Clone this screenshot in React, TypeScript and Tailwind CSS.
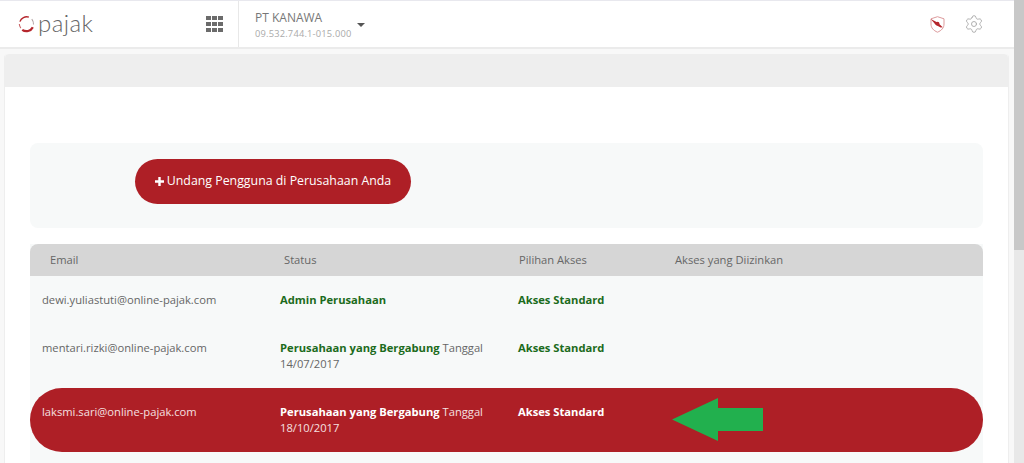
import { Settings } from "lucide-react";

type Row = {
  email: string;
  status: string;
  date?: string;
  active?: boolean;
  height: string;
};

const rows: Row[] = [
  { email: "dewi.yuliastuti@online-pajak.com", status: "Admin Perusahaan", height: "h-[48px]" },
  { email: "mentari.rizki@online-pajak.com", status: "Perusahaan yang Bergabung", date: "14/07/2017", height: "h-[64px]" },
  { email: "laksmi.sari@online-pajak.com", status: "Perusahaan yang Bergabung", date: "18/10/2017", active: true, height: "h-[64px]" },
];

function Logo() {
  return (
    <div className="flex items-center gap-[3px]">
      <svg width="17" height="18" viewBox="0 0 18 18" fill="none">
        <path d="M2 6.5A7.6 7.6 0 0 1 11.5 1.7" stroke="#b5262c" strokeWidth="1.5" />
        <path d="M14.6 3.8A7.6 7.6 0 0 1 16.4 9.5" stroke="#b0a0a0" strokeWidth="1.1" />
        <path d="M15.7 12.5A7.6 7.6 0 0 1 4.5 15.2" stroke="#b5262c" strokeWidth="2.4" />
        <path d="M3 13.3A7.6 7.6 0 0 1 1.4 9" stroke="#c9666a" strokeWidth="1.2" />
      </svg>
      <span className="font-['Lato'] font-light text-[24px] leading-none tracking-[0.4px] text-[#666] relative -top-[1px]">
        pajak
      </span>
    </div>
  );
}

function GridIcon() {
  return (
    <div className="grid grid-cols-3 gap-[1.5px] w-[17px]">
      {Array.from({ length: 9 }).map((_, i) => (
        <div key={i} className="w-[4.6px] h-[4.6px] bg-[#6b6b6b]" />
      ))}
    </div>
  );
}

function ShieldIcon() {
  return (
    <svg width="15" height="17" viewBox="0 0 15 17" fill="none">
      <path d="M7.5 0.7L14 2.8V8C14 12 11.5 14.5 7.5 16.2C3.5 14.5 1 12 1 8V2.8L7.5 0.7Z" stroke="#dc9a9c" strokeWidth="1" />
      <path d="M0.8 3L7.5 6.6L12.8 11.2L10.6 11.6L5.6 8.8Z" fill="#b5262c" />
      <circle cx="7.6" cy="7.7" r="1.9" fill="#b5262c" />
    </svg>
  );
}

export default function App() {
  return (
    <div className="h-[463px] overflow-hidden flex bg-[#f8f8f8] font-['Open_Sans',sans-serif]">
      <div className="flex-1 min-w-0 flex flex-col">
        <header className="h-[49px] shrink-0 bg-white border-t border-[#e8e8ee] border-b-[2px] border-b-[#ebebeb] flex items-center">
          <div className="w-[198px] pl-[18px] shrink-0">
            <Logo />
          </div>
          <div className="w-[40px] shrink-0 flex justify-start pl-[8px]">
            <GridIcon />
          </div>
          <div className="h-full border-l border-[#e8e8e8] pl-[16px] flex items-center gap-[5px]">
            <div className="flex flex-col gap-[1px] pt-[3px]">
              <span className="text-[12px] leading-[16px] text-[#777]">PT KANAWA</span>
              <span className="text-[9.3px] leading-[14px] text-[#aaa] tracking-[0.2px]">09.532.744.1-015.000</span>
            </div>
            <div className="w-0 h-0 border-x-[4px] border-x-transparent border-t-[4px] border-t-[#555] mt-[2px]" />
          </div>
          <div className="ml-auto flex items-center gap-[19px] pr-[30px]">
            <ShieldIcon />
            <Settings size={20} strokeWidth={1.1} className="text-[#aaa]" />
          </div>
        </header>

        <main className="mt-[5px] ml-[4px] mr-[5px] flex-1 bg-white rounded-t-[4px] border-x border-[#eeeeee] flex flex-col min-h-0">
          <div className="h-[33px] shrink-0 bg-[#eeeeee] rounded-t-[4px]" />
          <div className="px-[25px] pt-[56px]">
            <div className="h-[85px] bg-[#f7f9f9] rounded-[8px] pt-[16px] pl-[105px]">
              <button className="h-[45px] w-[276px] rounded-full bg-[#ae1f26] text-white text-[12.35px] flex items-center justify-center gap-[3px]">
                <svg width="9" height="9" viewBox="0 0 9 9" fill="white">
                  <path d="M3.3 0h2.4v3.3H9v2.4H5.7V9H3.3V5.7H0V3.3h3.3z" />
                </svg>
                Undang Pengguna di Perusahaan Anda
              </button>
            </div>

            <div className="mt-[16px] bg-[#f7f9f9] h-[300px]">
              <div className="h-[32px] bg-[#d6d6d6] rounded-t-[8px] flex items-center text-[11.2px] text-[#666] pt-[1px]">
                <span className="w-[254px] pl-[20px]">Email</span>
                <span className="w-[235px]">Status</span>
                <span className="w-[156px]">Pilihan Akses</span>
                <span>Akses yang Diizinkan</span>
              </div>
              {rows.map((r) => (
                <div
                  key={r.email}
                  className={`${r.height} flex text-[11.2px] leading-[16px] pl-[12px] pt-[16px] ${
                    r.active ? "bg-[#ae1f26] rounded-full text-[#f5e0e0]" : "text-[#666]"
                  }`}
                >
                  <span className="w-[238px] shrink-0">{r.email}</span>
                  <span className="w-[238px] shrink-0">
                    <b className={r.active ? "text-white" : "text-[#1c6b1c]"}>{r.status}</b>
                    {r.date && (
                      <>
                        {" "}Tanggal
                        <br />
                        {r.date}
                      </>
                    )}
                  </span>
                  <b className={r.active ? "text-white" : "text-[#1c6b1c]"}>Akses Standard</b>
                  {r.active && (
                    <svg width="91" height="44" viewBox="0 0 91 44" className="ml-[68px] -mt-[6px]">
                      <polygon points="0,21.5 46,0 46,10 91,10 91,33 46,33 46,43" fill="#22b04e" />
                    </svg>
                  )}
                </div>
              ))}
            </div>
          </div>
        </main>
      </div>
      <div className="w-[10px] shrink-0 bg-[#e8e8e8] flex flex-col">
        <div className="h-[250px] bg-[#c8c8c8]" />
      </div>
    </div>
  );
}
